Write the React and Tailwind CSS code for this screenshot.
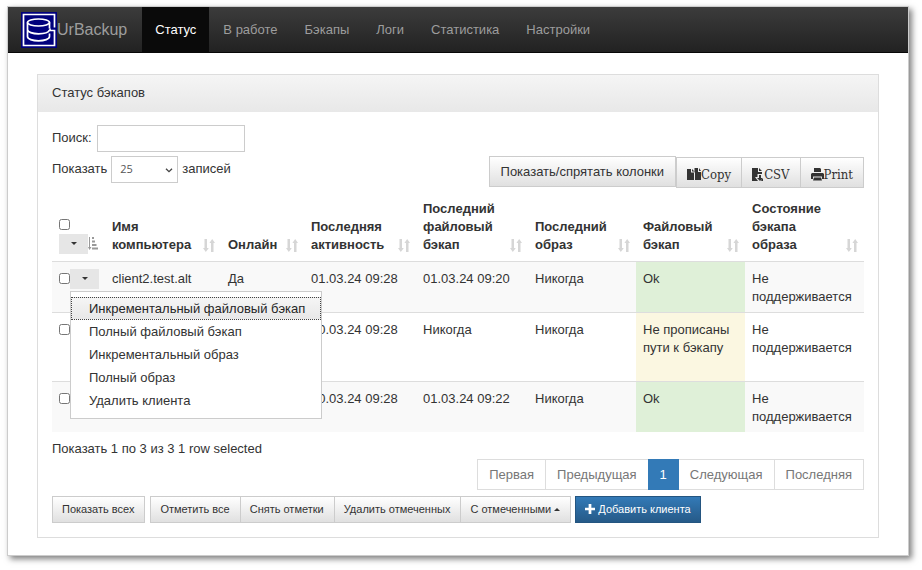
import React, { useState } from "react";

const columns = [
  { title: "Имя компьютера", width: "w-[116px]" },
  { title: "Онлайн", width: "w-[83px]" },
  { title: "Последняя активность", width: "w-[112px]" },
  { title: "Последний файловый бэкап", width: "w-[112px]" },
  { title: "Последний образ", width: "w-[108px]" },
  { title: "Файловый бэкап", width: "w-[109px]" },
  { title: "Состояние бэкапа образа", width: "" },
];

const clients = [
  {
    id: 1,
    name: "client2.test.alt",
    online: "Да",
    seen: "01.03.24 09:28",
    file: "01.03.24 09:20",
    image: "Никогда",
    fileStatus: "Ok",
    imageStatus: "Не поддерживается",
    row: "h-[51px] bg-[#f9f9f9]",
    cell: "bg-[#dff0d8]",
  },
  {
    id: 2,
    name: "",
    online: "",
    seen: "10.03.24 09:28",
    file: "Никогда",
    image: "Никогда",
    fileStatus: "Не прописаны пути к бэкапу",
    imageStatus: "Не поддерживается",
    row: "h-[69px]",
    cell: "bg-[#fbf7e1]",
  },
  {
    id: 3,
    name: "",
    online: "",
    seen: "10.03.24 09:28",
    file: "01.03.24 09:22",
    image: "Никогда",
    fileStatus: "Ok",
    imageStatus: "Не поддерживается",
    row: "h-[51px] bg-[#f9f9f9]",
    cell: "bg-[#dff0d8]",
  },
];

const menuItems = [
  "Инкрементальный файловый бэкап",
  "Полный файловый бэкап",
  "Инкрементальный образ",
  "Полный образ",
  "Удалить клиента",
];

const navItems = ["Статус", "В работе", "Бэкапы", "Логи", "Статистика", "Настройки"];

const button =
  "border border-[#ccc] bg-linear-to-b from-white to-[#e0e0e0] text-[#333] whitespace-nowrap cursor-pointer";
const toolButton = `${button} h-[31px] px-[10px] pt-1 flex items-center`;
const smallButton = `${button} h-[27px] pl-[9px] pr-[10px] pb-0.5`;
const pageButton = "h-[31px] px-[11px] border";

const Logo = () => (
  <svg width="36" height="36" viewBox="0 0 36 36" fill="none" stroke="#fff" strokeWidth="1.700">
    <rect width="36" height="36" fill="#00007c" stroke="none" />
    <path d="M33.500 15.500V2.500H2.500v31H33.500V18.500H29v-2" />
    <ellipse cx="17.500" cy="10.500" rx="11" ry="3.500" />
    <path d="M6.500 10.500v14c0 2.500 5 4.300 11 4.300s11-1.800 11-4.300v-3M28.500 10.500v6M6.500 17.500c0 2.500 5 4.300 11 4.300 5 0 10-1.300 11-3.800" />
  </svg>
);

const SortIcon = () => (
  <svg width="12" height="13" viewBox="0 0 12 13" fill="#d6d6d6" className="shrink-0 mb-0.5">
    <path d="M1.500 0h2.500v9h1.800L2.800 13 0 9h1.500zM8 13h2.500V4H12L9.200 0 6.400 4H8z" />
  </svg>
);

const SortedIcon = () => (
  <svg width="10" height="13" viewBox="0 0 10 13" fill="#999">
    <path d="M1 0h1v10h1.500L1.500 13 0 10h1zM4 0h2v2H4zM4 3.500h3v2H4zM4 7h4.500v2H4zM4 10.500h6v2H4z" />
  </svg>
);

const Caret = ({ up }) => (
  <svg width="6" height="3" viewBox="0 0 6 3" fill="currentColor" className="inline-block align-middle">
    <path d={up ? "M0 3l3-3 3 3z" : "M0 0h6L3 3z"} />
  </svg>
);

const CopyIcon = () => (
  <svg width="14" height="14" viewBox="0 0 14 14" fill="#333">
    <path d="M0 1h4v3.500h3V12H0zM5 1l2.500 2.500H5zM7.500 0H11v4h3v8H8V4.500h-.5zM12 0l2 3h-2z" />
  </svg>
);

const CsvIcon = () => (
  <svg width="12" height="14" viewBox="0 0 12 14" fill="#333">
    <path d="M0 0h6v4h4v2H5.500v3H3l3 4H0zM7 0l3 3H7zM7 7h2v3h2l-3 3-3-3h2zM10 11h1v2H9z" />
  </svg>
);

const PrintIcon = () => (
  <svg width="13" height="13" viewBox="0 0 13 13" fill="#333">
    <path d="M3 0h6l1 1v3H3zM1 5h11l1 1v5h-2V8.500H2V11H0V6zM3 9.500h7l1 3H2z" />
  </svg>
);

const App = () => {
  const [search, setSearch] = useState("");
  const [openMenu, setOpenMenu] = useState(1);

  return (
    <div className="bg-white pt-[6px] pl-[7px] pr-[13px] pb-[14px] font-['Liberation_Sans',Arial,sans-serif] text-[13px] leading-[18px] text-[#333]">
      <div className="border border-[#ccc] shadow-[3px_3px_6px_rgba(0,0,0,0.5)] pb-[17px]">
        <nav className="flex gap-px h-[46px] bg-linear-to-b from-[#3c3c3c] to-[#222] border-b border-[#080808] text-[#9d9d9d]">
          <a href="#" className="flex items-center pl-[13px] pr-[14px] text-base">
            <Logo />
            UrBackup
          </a>
          {navItems.map((item, i) => (
            <a
              key={item}
              href="#"
              className={
                i == 0
                  ? "flex items-center px-[13px] bg-[#0a0a0a] text-white"
                  : "flex items-center px-[13px]"
              }
            >
              {item}
            </a>
          ))}
        </nav>

        <div className="mt-[21px] mx-[29px] border border-[#ddd]">
          <h1 className="h-[37px] px-[14px] pb-0.5 flex items-center bg-linear-to-b from-[#f5f5f5] to-[#e8e8e8]">
            Статус бэкапов
          </h1>

          <div className="px-[14px] pt-[13px] pb-[14px]">
            <div className="flex items-center gap-[5px]">
              <label htmlFor="search" className="pb-0.5">
                Поиск:
              </label>
              <input
                id="search"
                type="text"
                className="w-[148px] h-[27px] border border-[#ccc] px-2"
                value={search}
                onChange={(e) => setSearch(e.target.value)}
              />
            </div>

            <div className="flex items-start justify-between mt-1">
              <div className="flex items-center gap-1">
                <label htmlFor="length" className="pb-0.5">
                  Показать
                </label>
                <span className="relative">
                  <select
                    id="length"
                    defaultValue="25"
                    className="block appearance-none w-[67px] h-[27px] border border-[#ccc] px-2 pb-0.5 bg-white font-['Open_Sans',sans-serif] text-[11px] text-[#555]"
                  >
                    <option>10</option>
                    <option>25</option>
                    <option>50</option>
                  </select>
                  <svg
                    width="8"
                    height="5"
                    viewBox="0 0 8 5"
                    fill="none"
                    stroke="#444"
                    strokeWidth="1.300"
                    className="absolute right-[5px] top-[12px] pointer-events-none"
                  >
                    <path d="M1 .7l3 3 3-3" />
                  </svg>
                </span>
                <span className="pb-0.5">записей</span>
              </div>

              <div className="flex items-end">
                <button className={`${button} h-[31px] px-[11px] mb-px`}>
                  Показать/спрятать колонки
                </button>
                <div className="flex font-['DejaVu_Serif_Condensed','DejaVu_Serif',serif] text-[13px]">
                  <button className={toolButton}>
                    <CopyIcon />
                    Copy
                  </button>
                  <button className={`${toolButton} -ml-px`}>
                    <CsvIcon />
                    CSV
                  </button>
                  <button className={`${toolButton} -ml-px`}>
                    <PrintIcon />
                    Print
                  </button>
                </div>
              </div>
            </div>

            <table className="w-full table-fixed mt-[5px]">
              <thead>
                <tr className="h-[68px] align-bottom text-left">
                  <th className="w-[53px] pl-[7px] pb-[7px]">
                    <input type="checkbox" aria-label="Отметить все" className="block size-[11px] mb-1" />
                    <div className="flex items-center">
                      <button
                        aria-label="С отмеченными"
                        className="w-[29px] h-5 bg-[#e6e6e6] flex items-center justify-center"
                      >
                        <Caret />
                      </button>
                      <SortedIcon />
                    </div>
                  </th>
                  {columns.map((col) => (
                    <th key={col.title} className={`${col.width} pl-[7px] pr-[6px] pb-[7px] font-bold`}>
                      <div className="flex items-end justify-between gap-2">
                        <span>{col.title}</span>
                        <SortIcon />
                      </div>
                    </th>
                  ))}
                </tr>
              </thead>
              <tbody>
                {clients.map((client) => (
                  <tr key={client.id} className={`${client.row} border-t border-[#ddd] align-top`}>
                    <td className="pl-[7px] pt-[7px]">
                      <div className="relative flex items-center">
                        <input
                          type="checkbox"
                          aria-label={`Отметить ${client.id}`}
                          className="size-[11px] shrink-0"
                        />
                        <button
                          aria-label="Действия"
                          className="w-[29px] h-5 bg-[#e6e6e6] flex items-center justify-center"
                          onClick={() => setOpenMenu(openMenu == client.id ? 0 : client.id)}
                        >
                          <Caret />
                        </button>
                        {openMenu == client.id && (
                          <ul className="absolute z-10 left-[11px] top-[22px] w-[252px] border border-[#ccc] bg-white pt-[5px] pb-[6px]">
                            {menuItems.map((item, i) => (
                              <li key={item}>
                                <a
                                  href="#"
                                  className={
                                    i == 0
                                      ? "flex items-center h-[23px] pl-[17px] pt-0.5 whitespace-nowrap bg-linear-to-b from-[#f5f5f5] to-[#e8e8e8] border border-dotted border-[#444] text-[#262626]"
                                      : "flex items-center h-[23px] pl-[18px] pt-0.5 whitespace-nowrap"
                                  }
                                >
                                  {item}
                                </a>
                              </li>
                            ))}
                          </ul>
                        )}
                      </div>
                    </td>
                    <td className="px-[7px] pt-2">{client.name}</td>
                    <td className="px-[7px] pt-2">{client.online}</td>
                    <td className="px-[7px] pt-2 whitespace-nowrap">{client.seen}</td>
                    <td className="px-[7px] pt-2 whitespace-nowrap">{client.file}</td>
                    <td className="px-[7px] pt-2">{client.image}</td>
                    <td className={`${client.cell} px-[7px] pt-2`}>{client.fileStatus}</td>
                    <td className="px-[7px] pt-2">{client.imageStatus}</td>
                  </tr>
                ))}
              </tbody>
            </table>

            <p className="mt-2">Показать 1 по 3 из 3 1 row selected</p>

            <div className="flex justify-end mt-px text-[#777]">
              <button className={`${pageButton} border-[#ddd]`}>Первая</button>
              <button className={`${pageButton} border-[#ddd] -ml-px`}>Предыдущая</button>
              <button className={`${pageButton} border-[#337ab7] bg-[#337ab7] text-white -ml-px`}>1</button>
              <button className={`${pageButton} border-[#ddd] border-l-0`}>Следующая</button>
              <button className={`${pageButton} border-[#ddd] -ml-px`}>Последняя</button>
            </div>

            <div className="flex mt-[6px] text-[11px]">
              <button className={smallButton}>Показать всех</button>
              <div className="flex ml-[5px]">
                <button className={smallButton}>Отметить все</button>
                <button className={`${smallButton} -ml-px`}>Снять отметки</button>
                <button className={`${smallButton} -ml-px`}>Удалить отмеченных</button>
                <button className={`${smallButton} -ml-px`}>
                  С отмеченными <Caret up />
                </button>
              </div>
              <button className="flex items-center gap-[3px] h-[27px] px-[9px] pb-0.5 ml-1 border border-[#245580] bg-linear-to-b from-[#337ab7] to-[#265a88] text-white whitespace-nowrap">
                <svg width="10" height="10" viewBox="0 0 11 11" fill="#fff">
                  <path d="M4 0h3v4h4v3H7v4H4V7H0V4h4z" />
                </svg>
                Добавить клиента
              </button>
            </div>
          </div>
        </div>
      </div>
    </div>
  );
};

export default App;
